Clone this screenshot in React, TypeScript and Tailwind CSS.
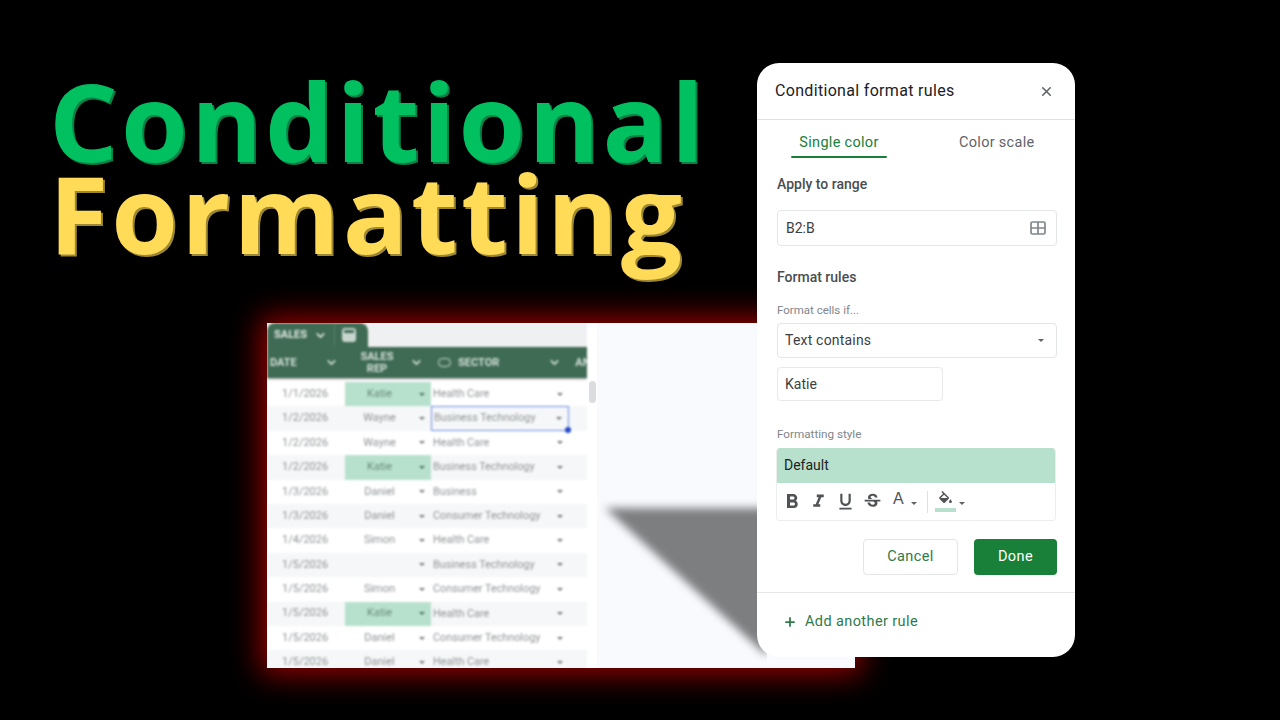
import { ChevronDown, X, Plus } from "lucide-react";
import { MdFormatBold, MdFormatItalic, MdFormatUnderlined, MdStrikethroughS } from "react-icons/md";

const rows = [
  ["1/1/2026", "Katie", "Health Care"],
  ["1/2/2026", "Wayne", "Business Technology"],
  ["1/2/2026", "Wayne", "Health Care"],
  ["1/2/2026", "Katie", "Business Technology"],
  ["1/3/2026", "Daniel", "Business"],
  ["1/3/2026", "Daniel", "Consumer Technology"],
  ["1/4/2026", "Simon", "Health Care"],
  ["1/5/2026", "", "Business Technology"],
  ["1/5/2026", "Simon", "Consumer Technology"],
  ["1/5/2026", "Katie", "Health Care"],
  ["1/5/2026", "Daniel", "Consumer Technology"],
  ["1/5/2026", "Daniel", "Health Care"],
];

const Caret = ({ className = "border-t-[#777]" }: { className?: string }) => (
  <span className={"inline-block h-0 w-0 border-x-[3.5px] border-t-[3.5px] border-x-transparent " + className} />
);

const Sheet = () => (
  <div className="relative ml-[267px] mt-[64px] flex h-[345px] w-[588px] overflow-hidden bg-[#f8fafd] font-['Roboto',sans-serif] shadow-[0_0_28px_6px_#980000]">
    <div className="flex w-[330px] shrink-0 bg-white">
      <div className="w-[320px] shrink-0 overflow-hidden blur-[0.8px]">
        <div className="flex h-[24px] w-[320px] items-end bg-[#eff0f2]">
          <div className="flex h-[24px] w-[101px] items-center rounded-t-lg bg-[#3f6b54] text-[#dfe8e3]">
            <span className="ml-[7px] text-[11px] font-bold">SALES</span>
            <ChevronDown size={13} strokeWidth={3} className="ml-[7px]" />
            <span className="ml-[7px] h-[24px] w-px bg-[#55806a]" />
            <span className="ml-[7px] h-[14px] w-[14px] rounded-[3px] bg-[#c9d6cf] p-[2px]">
              <span className="block h-[3px] rounded-[1px] bg-[#3f6b54]" />
            </span>
          </div>
        </div>
        <div className="flex h-[31px] w-[320px] items-center bg-[#3f6b54] text-[11px] font-bold leading-[12px] text-[#d3dfd8] shadow-[0_1px_2px_#999]">
          <div className="flex w-[78px] items-center justify-between pl-[3px] pr-[7px]">
            DATE
            <ChevronDown size={13} strokeWidth={3} />
          </div>
          <div className="flex w-[86px] items-center justify-between pr-[8px]">
            <span className="w-[64px] text-center">
              SALES
              <br />
              REP
            </span>
            <ChevronDown size={13} strokeWidth={3} />
          </div>
          <div className="flex w-[156px] items-center overflow-hidden">
            <span className="ml-[7px] h-[9px] w-[13px] shrink-0 rounded-full border-[1.5px] border-[#d3dfd8]" />
            <span className="ml-[7px]">SECTOR</span>
            <ChevronDown size={13} strokeWidth={3} className="ml-[49px] shrink-0" />
            <span className="ml-[14px]">AN</span>
          </div>
        </div>
        <div className="pt-[4px]">
          {rows.map((row, i) => (
            <div
              key={i}
              className={"flex h-[24.4px] items-center text-[10.8px] text-[#909396] " + (i % 2 ? "bg-[#f5f7f8]" : "bg-white")}
            >
              <div className="w-[78px] pl-[15px] text-[11px]">{row[0]}</div>
              <div
                className={
                  "flex h-full w-[86px] items-center justify-between pr-[6px] text-[11px] " +
                  (row[1] === "Katie" ? "bg-[#b7e1cd] text-[#6b8a7b]" : "")
                }
              >
                <span className="w-[69px] text-center">{row[1]}</span>
                <Caret className={row[1] === "Katie" ? "border-t-[#4f6f5f]" : "border-t-[#777]"} />
              </div>
              <div
                className={
                  "flex h-full w-[138px] items-center justify-between pl-[2px] pr-[6px] " +
                  (i === 1 ? "relative border border-[#6d8be0]" : "")
                }
              >
                {row[2]}
                <Caret />
                {i === 1 && <span className="absolute -bottom-[3px] -right-[3px] h-[6px] w-[6px] rounded-full bg-[#2246c8]" />}
              </div>
            </div>
          ))}
        </div>
      </div>
      <div className="flex w-[10px] justify-center pt-[58px]">
        <span className="h-[22px] w-[7px] rounded-full bg-[#dadce0] blur-[0.5px]" />
      </div>
    </div>
    {/* stray shadow from the screen recording */}
    <svg className="absolute left-[330px] top-[175px] h-[170px] w-[170px]" viewBox="0 0 170 170">
      <polygon points="8,10 170,10 170,158" fill="#7c7e80" className="blur-[4px]" />
    </svg>
  </div>
);

const Panel = () => (
  <div className="absolute left-[757px] top-[63px] flex h-[594px] w-[318px] flex-col rounded-[22px] bg-white font-['Roboto',sans-serif] text-[#3c4043]">
    <div className="flex h-[57px] shrink-0 items-center justify-between border-b border-[#e0e0e0] pl-[18px] pr-[21px]">
      <span className="text-[16px] tracking-[0.32px] text-[#202124]">Conditional format rules</span>
      <X size={15} strokeWidth={2.5} className="text-[#5f6368]" />
    </div>
    <div className="flex h-[38px] shrink-0 text-[14.5px] tracking-[0.3px]">
      <div className="ml-[34px] flex w-[96px] flex-col items-center justify-between pt-[12px] text-[#188038]">
        Single color
        <span className="h-[2.5px] w-full rounded-full bg-[#188038]" />
      </div>
      <div className="ml-[72px] pt-[12px] text-[#5f6368]">Color scale</div>
    </div>
    <div className="ml-[20px] mt-[16px] text-[14px] font-medium leading-[20px] text-[#4a4d50]">Apply to range</div>
    <div className="ml-[20px] mt-[16px] flex h-[36px] w-[280px] shrink-0 items-center justify-between rounded-[4px] border border-[#e4e5e7] pl-[8px] pr-[10px] text-[14px]">
      B2:B
      <svg width="16" height="14" viewBox="0 0 16 14" fill="none" stroke="#80868b" strokeWidth="1.7">
        <rect x="1" y="1" width="14" height="12" rx="1.5" />
        <path d="M8 1v12M1 7h14" />
      </svg>
    </div>
    <div className="ml-[20px] mt-[21px] text-[14px] font-medium leading-[20px] text-[#4a4d50]">Format rules</div>
    <div className="ml-[20px] mt-[15px] text-[11.5px] leading-[16px] text-[#80868b]">Format cells if...</div>
    <div className="ml-[20px] mt-[5px] flex h-[35px] w-[280px] shrink-0 items-center justify-between rounded-[4px] border border-[#e4e5e7] pl-[7px] pr-[12px] text-[14px] tracking-[0.2px]">
      Text contains
      <Caret className="border-t-[#5f6368]" />
    </div>
    <div className="ml-[20px] mt-[9px] flex h-[34px] w-[166px] shrink-0 items-center rounded-[4px] border border-[#e8e9eb] pl-[7px] text-[14px]">Katie</div>
    <div className="ml-[20px] mt-[25px] text-[11.7px] leading-[16px] text-[#80868b]">Formatting style</div>
    <div className="ml-[19px] mt-[6px] w-[280px] shrink-0 overflow-hidden rounded-[4px] border border-t-0 border-[#eceded]">
      <div className="flex h-[35px] items-center bg-[#b7e1cd] pl-[7px] text-[14px] text-[#202124]">Default</div>
      <div className="flex h-[37px] items-center pl-[2px] text-[#505356]">
        <span className="flex w-[26px] justify-center"><MdFormatBold size={24} /></span>
        <span className="flex w-[27px] justify-center"><MdFormatItalic size={21} /></span>
        <span className="flex w-[27px] justify-center"><MdFormatUnderlined size={21} /></span>
        <span className="flex w-[26px] justify-center"><MdStrikethroughS size={21} /></span>
        <span className="ml-[8px] -translate-y-[3px] font-['Liberation_Sans',sans-serif] text-[16px] leading-none">A</span>
        <Caret className="ml-[7px] translate-y-[2px] border-t-[#5f6368]" />
        <span className="ml-[10px] h-[22px] w-px bg-[#e0e0e0]" />
        <span className="ml-[7px] flex w-[21px] flex-col items-center">
          <svg width="17" height="17" viewBox="0 0 24 24" fill="#505356">
            <path d="M16.56 8.94L7.62 0 6.21 1.41l2.38 2.38-5.15 5.15c-.59.59-.59 1.54 0 2.12l5.5 5.5c.29.29.68.44 1.06.44s.77-.15 1.06-.44l5.5-5.5c.59-.58.59-1.53 0-2.12zM5.21 10L10 5.21 14.79 10H5.21z" />
            <path d="M19 11.5s-2 2.17-2 3.5c0 1.1.9 2 2 2s2-.9 2-2c0-1.33-2-3.5-2-3.5z" />
          </svg>
          <span className="h-[4px] w-[21px] bg-[#b7e1cd]" />
        </span>
        <Caret className="ml-[3px] translate-y-[2px] border-t-[#5f6368]" />
      </div>
    </div>
    <div className="ml-[106px] mt-[18px] flex shrink-0 gap-[16px] text-[14.5px] font-[450] tracking-[0.4px]">
      <div className="flex h-[36px] w-[95px] items-center justify-center rounded-[4px] border border-[#e4e5e7] text-[#2f7a4b]">Cancel</div>
      <div className="flex h-[36px] w-[83px] items-center justify-center rounded-[4px] bg-[#188038] text-white">Done</div>
    </div>
    <div className="mt-[17px] flex h-[65px] shrink-0 items-center border-t border-[#e6e7e8] pb-[6px] pl-[26px] text-[14.5px] font-[450] tracking-[0.4px] text-[#2f7a4b]">
      <Plus size={14} strokeWidth={3} />
      <span className="ml-[8px]">Add another rule</span>
    </div>
  </div>
);

export default function App() {
  return (
    <div className="relative h-[720px] w-[1280px] overflow-hidden bg-black">
      <div className="pl-[49px] pt-[75px] font-['Open_Sans',sans-serif] text-[108px] font-bold leading-[92px] tracking-[3.1px]">
        <div className="text-[#00c060] [text-shadow:2px_2px_0_#0a7f46]">Conditional</div>
        <div className="text-[#ffdb58] [text-shadow:2px_2px_0_#9c8732]">Formatting</div>
      </div>
      <Sheet />
      <Panel />
    </div>
  );
}
